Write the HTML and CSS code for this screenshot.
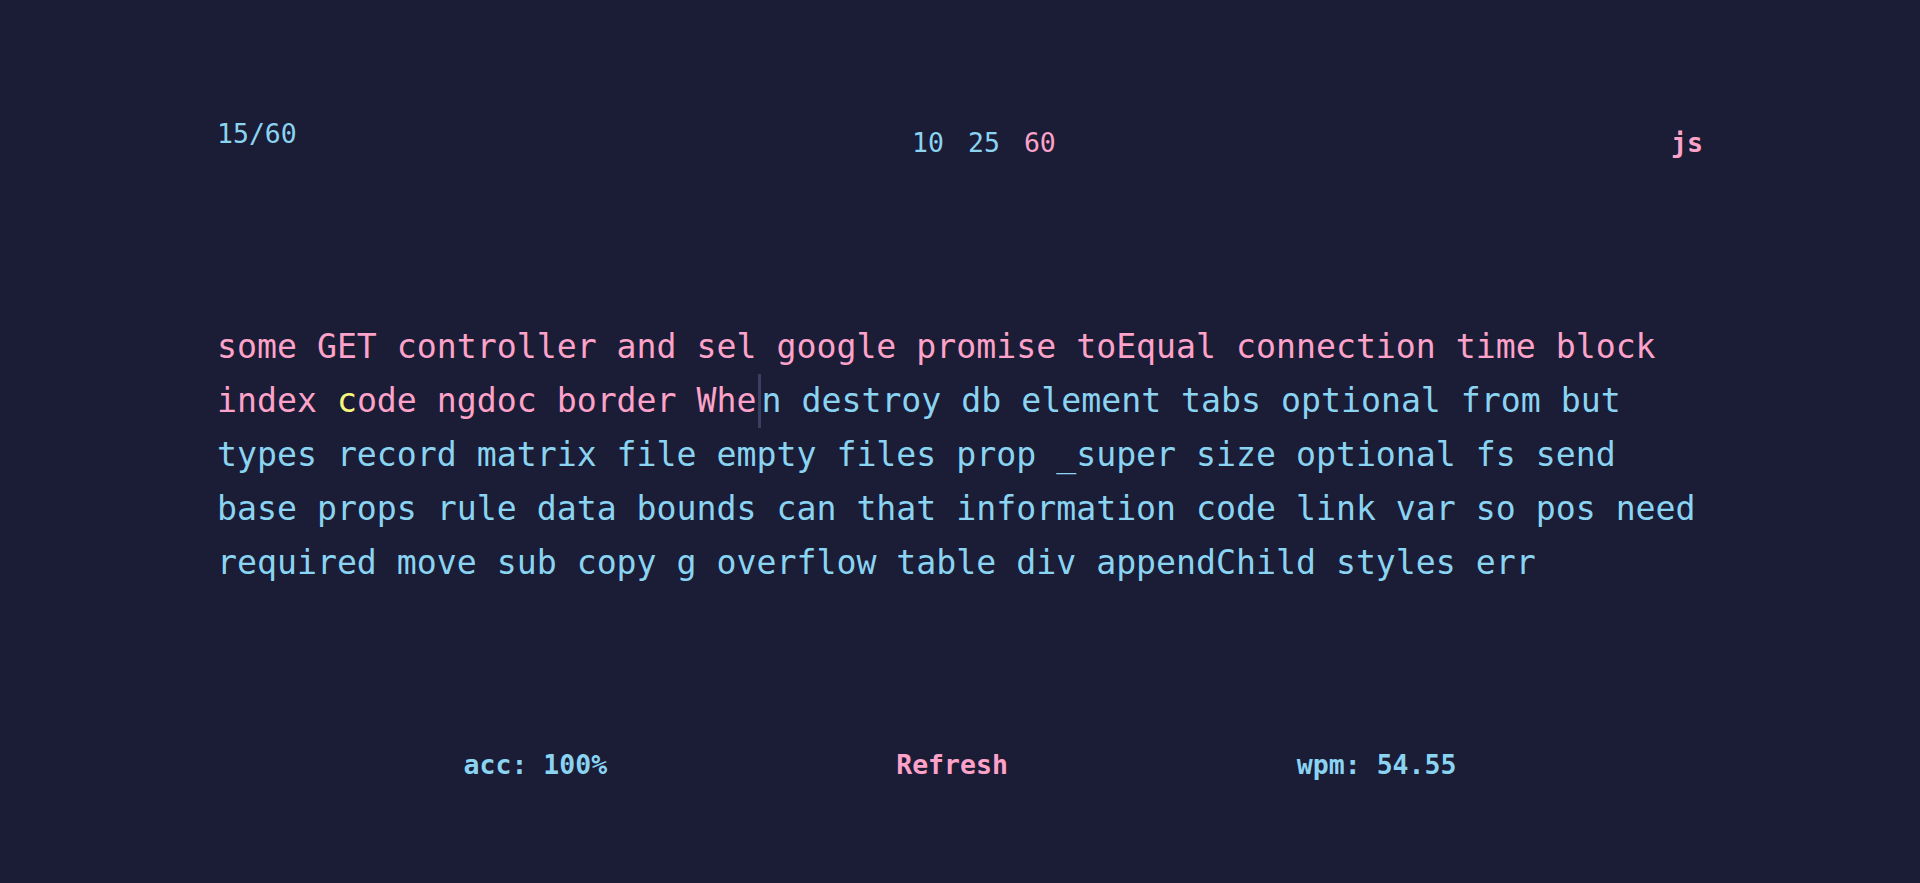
FILE: index.html
```html
<!DOCTYPE html>
<html lang="en">
<head>
<meta charset="utf-8">
<title>Typing test</title>
<link rel="stylesheet" href="styles.css">
</head>
<body>
<main class="app">
  <header class="topbar">
    <div class="counter">15/60</div>
    <div class="modes">
      <button class="mode">10</button>
      <button class="mode">25</button>
      <button class="mode active">60</button>
    </div>
    <button class="lang">js</button>
  </header>
  <section class="words"><span class="done">some GET controller and sel google promise toEqual connection time block index </span><span class="wrong">c</span><span class="done">ode ngdoc border Whe</span><span class="caret"></span><span class="todo">n destroy db element tabs optional from but types record matrix file empty files prop _super size optional fs send base props rule data bounds can that information code link var so pos need required move sub copy g overflow table div appendChild styles err</span></section>
  <footer class="stats">
    <span class="stat">acc: 100%</span>
    <button class="refresh">Refresh</button>
    <span class="stat">wpm: 54.55</span>
  </footer>
</main>
</body>
</html>
```
FILE: styles.css
```css
html, body {
  margin: 0;
  background: #1b1c36;
}
body {
  min-height: 100vh;
  font-family: "DejaVu Sans Mono", "Liberation Mono", monospace;
  color: #8ad4f2;
}
.app {
  width: 1486px;
  margin: 0 auto;
  padding-top: 114px;
}
.topbar {
  display: flex;
  justify-content: space-between;
  align-items: flex-start;
  font-size: 26.5px;
  line-height: 40px;
}
.counter {
  color: #8ad4f2;
}
.modes {
  display: flex;
  gap: 24px;
  padding-top: 9px;
}
button {
  background: none;
  border: 0;
  padding: 0;
  margin: 0;
  font: inherit;
  line-height: inherit;
  cursor: pointer;
}
.mode {
  color: #8ad4f2;
}
.mode.active {
  color: #fda2c8;
}
.lang {
  padding-top: 9px;
  color: #fda2c8;
  font-weight: bold;
}
.words {
  margin-top: 157px;
  font-size: 33.2px;
  line-height: 54px;
  white-space: normal;
}
.done {
  color: #fda2c8;
}
.wrong {
  color: #f8f67c;
}
.todo {
  color: #8ad4f2;
}
.caret {
  display: inline-block;
  width: 3px;
  height: 54px;
  margin: 0 1px;
  vertical-align: top;
  background: #3a3e60;
}
.stats {
  margin-top: 155px;
  display: flex;
  justify-content: center;
  gap: 289px;
  font-size: 26.5px;
  line-height: 40px;
  font-weight: bold;
}
.stat {
  color: #8ad4f2;
}
.refresh {
  color: #fda2c8;
  font-weight: bold;
}
```
